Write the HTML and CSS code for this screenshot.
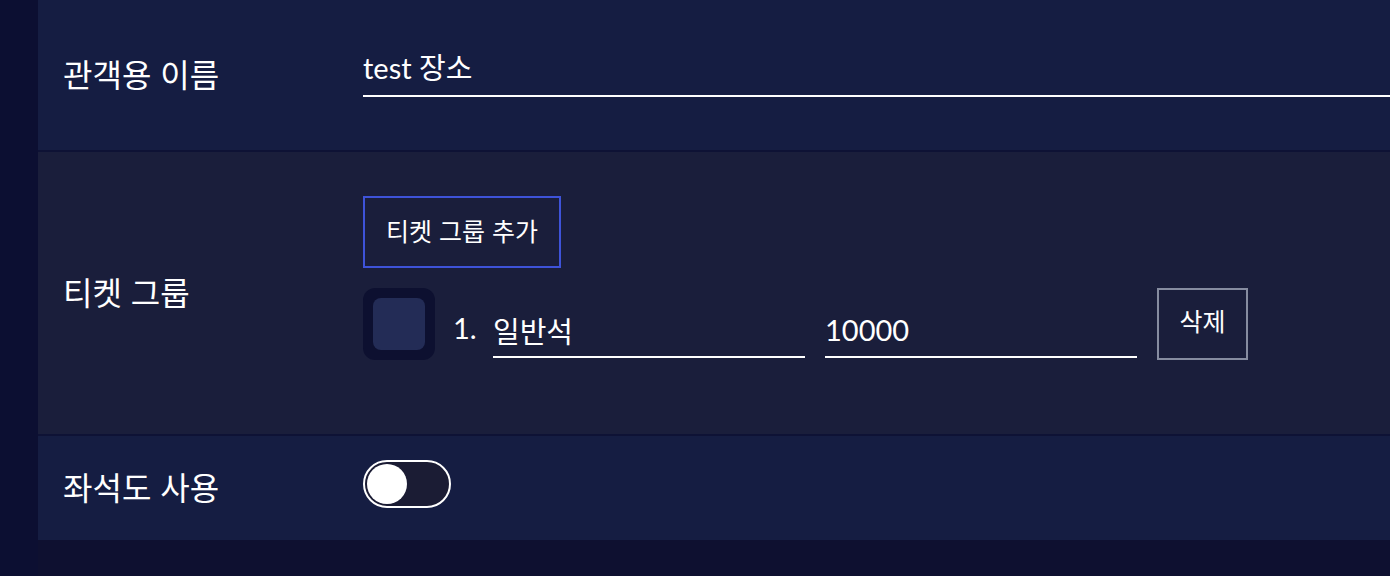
FILE: index.html
```html
<!DOCTYPE html>
<html lang="ko">
<head>
<meta charset="utf-8">
<title>장소 설정</title>
<link rel="stylesheet" href="styles.css">
</head>
<body>
<div class="page">
  <div class="rail"></div>
  <div class="panel">
    <div class="row row-name">
      <div class="label">관객용 이름</div>
      <div class="value">
        <input class="field field-wide" type="text" value="test 장소">
      </div>
    </div>
    <div class="row row-tickets">
      <div class="label">티켓 그룹</div>
      <div class="value value-stack">
        <button class="btn btn-add" type="button">티켓 그룹 추가</button>
        <div class="ticket">
          <div class="swatch"><div class="swatch-inner"></div></div>
          <span class="ticket-no">1.</span>
          <input class="field field-ticket" type="text" value="일반석">
          <input class="field field-ticket" type="text" value="10000">
          <button class="btn btn-del" type="button">삭제</button>
        </div>
      </div>
    </div>
    <div class="row row-seat">
      <div class="label">좌석도 사용</div>
      <div class="value">
        <div class="toggle"><div class="knob"></div></div>
      </div>
    </div>
  </div>
</div>
</body>
</html>
```
FILE: styles.css
```css
* { box-sizing: border-box; }
html, body {
  margin: 0;
  padding: 0;
  background: #0e1030;
  overflow: hidden;
}
body {
  font-family: "Lato", "Noto Sans CJK KR", sans-serif;
  color: #ffffff;
}
.page {
  display: flex;
  width: 1390px;
  height: 576px;
}
.rail {
  width: 38px;
  flex: none;
  background: #0c0f32;
}
.panel {
  flex: 1;
  display: flex;
  flex-direction: column;
  height: 540px;
  overflow: hidden;
}
.row {
  display: grid;
  grid-template-columns: 300px 1fr;
  padding-left: 25px;
  align-items: center;
}
.row-name {
  height: 152px;
  background: #151d42;
  border-bottom: 2px solid #0e1235;
}
.row-tickets {
  height: 284px;
  background: #1a1e3b;
  border-bottom: 2px solid #0e1235;
}
.row-seat {
  height: 104px;
  background: #151d42;
}
.label {
  font-family: "Noto Sans CJK KR", sans-serif;
  font-size: 32px;
  line-height: 1;
  padding-bottom: 4px;
}
.value {
  display: flex;
  align-items: center;
}
.value-stack {
  flex-direction: column;
  align-items: flex-start;
  gap: 20px;
  padding-top: 44px;
  padding-bottom: 74px;
  align-self: stretch;
}
.field {
  background: transparent;
  border: 0;
  border-bottom: 2px solid #ffffff;
  color: #ffffff;
  font-family: "Lato", "Noto Sans CJK KR", sans-serif;
  font-size: 29px;
  padding: 0;
  outline: none;
}
.field-wide {
  width: 1100px;
  height: 46px;
  padding-bottom: 14px;
  margin-top: -2px;
  flex: none;
}
.btn {
  background: transparent;
  color: #ffffff;
  font-family: "Noto Sans CJK KR", sans-serif;
  font-size: 25px;
  line-height: 1;
  cursor: pointer;
}
.btn-add {
  width: 198px;
  height: 72px;
  border: 2px solid #3e53d9;
  padding: 0 0 4px;
}
.ticket {
  display: flex;
  align-items: center;
  height: 72px;
}
.swatch {
  width: 72px;
  height: 72px;
  border-radius: 12px;
  background: #0d1030;
  display: flex;
  align-items: center;
  justify-content: center;
  flex: none;
}
.swatch-inner {
  width: 52px;
  height: 52px;
  border-radius: 8px;
  background: #232c56;
}
.ticket-no {
  font-size: 29px;
  margin-left: 18px;
  width: 40px;
  padding-top: 6px;
}
.field-ticket {
  width: 312px;
  height: 46px;
  align-self: flex-end;
  margin-bottom: 2px;
  padding-bottom: 9px;
  margin-right: 20px;
}
.btn-del {
  width: 91px;
  height: 72px;
  border: 2px solid #868ca0;
  padding: 0 0 8px;
}
.toggle {
  width: 88px;
  height: 48px;
  border: 2px solid #ffffff;
  border-radius: 24px;
  background: #1b1c34;
  padding: 2px;
  margin-top: -8px;
}
.knob {
  width: 40px;
  height: 40px;
  border-radius: 50%;
  background: #ffffff;
}
```
